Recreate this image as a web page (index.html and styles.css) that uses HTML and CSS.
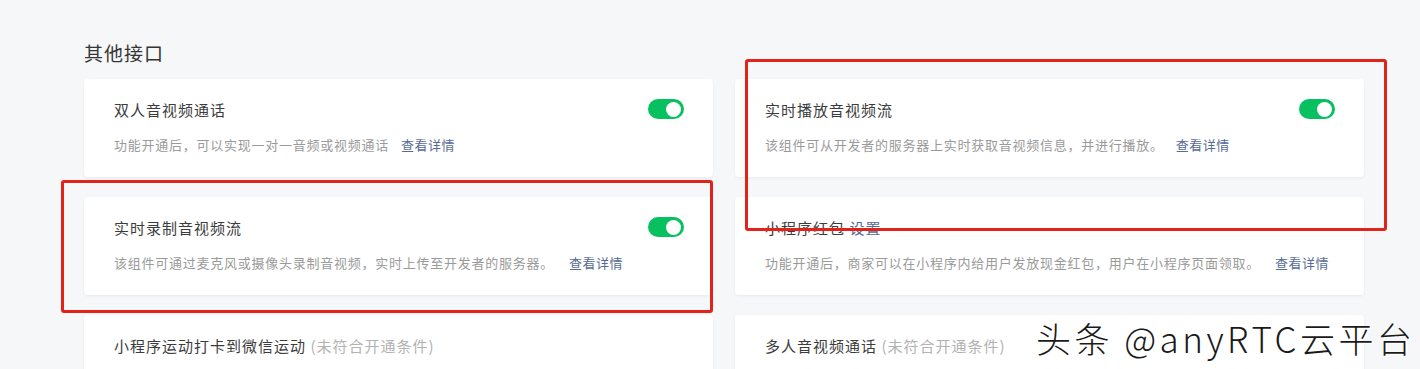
FILE: index.html
```html
<!DOCTYPE html>
<html lang="zh-CN">
<head>
<meta charset="utf-8">
<title>其他接口</title>
<link rel="stylesheet" href="styles.css">
</head>
<body>
<div class="page">
  <h2 class="section-title">其他接口</h2>
  <div class="grid">
    <div class="card">
      <div class="card-head">
        <span class="card-title">双人音视频通话</span>
        <span class="switch on"><span class="knob"></span></span>
      </div>
      <p class="card-desc">功能开通后，可以实现一对一音频或视频通话<a class="link">查看详情</a></p>
    </div>
    <div class="card">
      <div class="card-head">
        <span class="card-title">实时播放音视频流</span>
        <span class="switch on"><span class="knob"></span></span>
      </div>
      <p class="card-desc">该组件可从开发者的服务器上实时获取音视频信息，并进行播放。<a class="link">查看详情</a></p>
    </div>
    <div class="card">
      <div class="card-head">
        <span class="card-title">实时录制音视频流</span>
        <span class="switch on"><span class="knob"></span></span>
      </div>
      <p class="card-desc">该组件可通过麦克风或摄像头录制音视频，实时上传至开发者的服务器。<a class="link link-far">查看详情</a></p>
    </div>
    <div class="card">
      <div class="card-head">
        <span class="card-title">小程序红包 <a class="link-inline">设置</a></span>
      </div>
      <p class="card-desc">功能开通后，商家可以在小程序内给用户发放现金红包，用户在小程序页面领取。<a class="link link-far">查看详情</a></p>
    </div>
    <div class="card">
      <div class="card-head">
        <span class="card-title">小程序运动打卡到微信运动 <span class="muted">(未符合开通条件)</span></span>
      </div>
      <p class="card-desc">&nbsp;</p>
    </div>
    <div class="card">
      <div class="card-head">
        <span class="card-title">多人音视频通话 <span class="muted">(未符合开通条件)</span></span>
      </div>
      <p class="card-desc">&nbsp;</p>
    </div>
  </div>
</div>
<div class="mark mark-left"></div>
<div class="mark mark-right"></div>
<div class="watermark">头条 @anyRTC云平台</div>
</body>
</html>
```

FILE: styles.css
```css
html, body {
  margin: 0;
  padding: 0;
  height: 369px;
  overflow: hidden;
  background: #f6f7f9;
  font-family: "Noto Sans CJK SC", "Liberation Sans", sans-serif;
}

.page {
  padding: 41px 0 0 84px;
  width: 1280px;
}

.section-title {
  margin: 0 0 14px 0;
  font-size: 19px;
  line-height: 24px;
  font-weight: 400;
  letter-spacing: 1px;
  color: #353535;
}

.grid {
  display: grid;
  grid-template-columns: 629px 629px;
  column-gap: 22px;
  row-gap: 20px;
}

.card {
  background: #fff;
  border-radius: 4px;
  box-shadow: 0 1px 3px rgba(0, 0, 0, 0.06);
  padding: 20px 29px 22px 30px;
  height: 98px;
  box-sizing: border-box;
}

.card-head {
  display: flex;
  justify-content: space-between;
  align-items: flex-start;
  height: 22px;
}

.card-title {
  font-size: 15px;
  line-height: 22px;
  letter-spacing: 1px;
  color: #3c3c3c;
  white-space: nowrap;
}

.muted {
  color: #b2b2b2;
}

.link-inline {
  color: #576b95;
}

.card-desc {
  margin: 14px 0 0 0;
  font-size: 13px;
  line-height: 20px;
  color: #9a9a9a;
  letter-spacing: 0.75px;
  white-space: nowrap;
}

.link {
  color: #576b95;
  margin-left: 12px;
  letter-spacing: 0.5px;
}

.link-far {
  margin-left: 15px;
}

.switch {
  display: flex;
  align-items: center;
  justify-content: flex-end;
  width: 36px;
  height: 20px;
  border-radius: 10px;
  background: #07c160;
  margin-top: 0;
  padding: 0 3px;
  box-sizing: border-box;
}

.knob {
  width: 15px;
  height: 15px;
  border-radius: 50%;
  background: #fff;
}

.mark {
  position: absolute;
  border: 3px solid #e2231a;
  border-radius: 3px;
  box-sizing: border-box;
}

.mark-left {
  left: 61px;
  top: 180px;
  width: 652px;
  height: 133px;
}

.mark-right {
  left: 745px;
  top: 59px;
  width: 642px;
  height: 172px;
}

.watermark {
  position: absolute;
  left: 1036px;
  top: 316px;
  font-size: 35px;
  line-height: 44px;
  font-weight: 300;
  color: #1a1a1a;
  letter-spacing: 3.5px;
  text-shadow: 2px 1px 0 #fff, 1px 0 0 #fff;
  white-space: nowrap;
}
```
